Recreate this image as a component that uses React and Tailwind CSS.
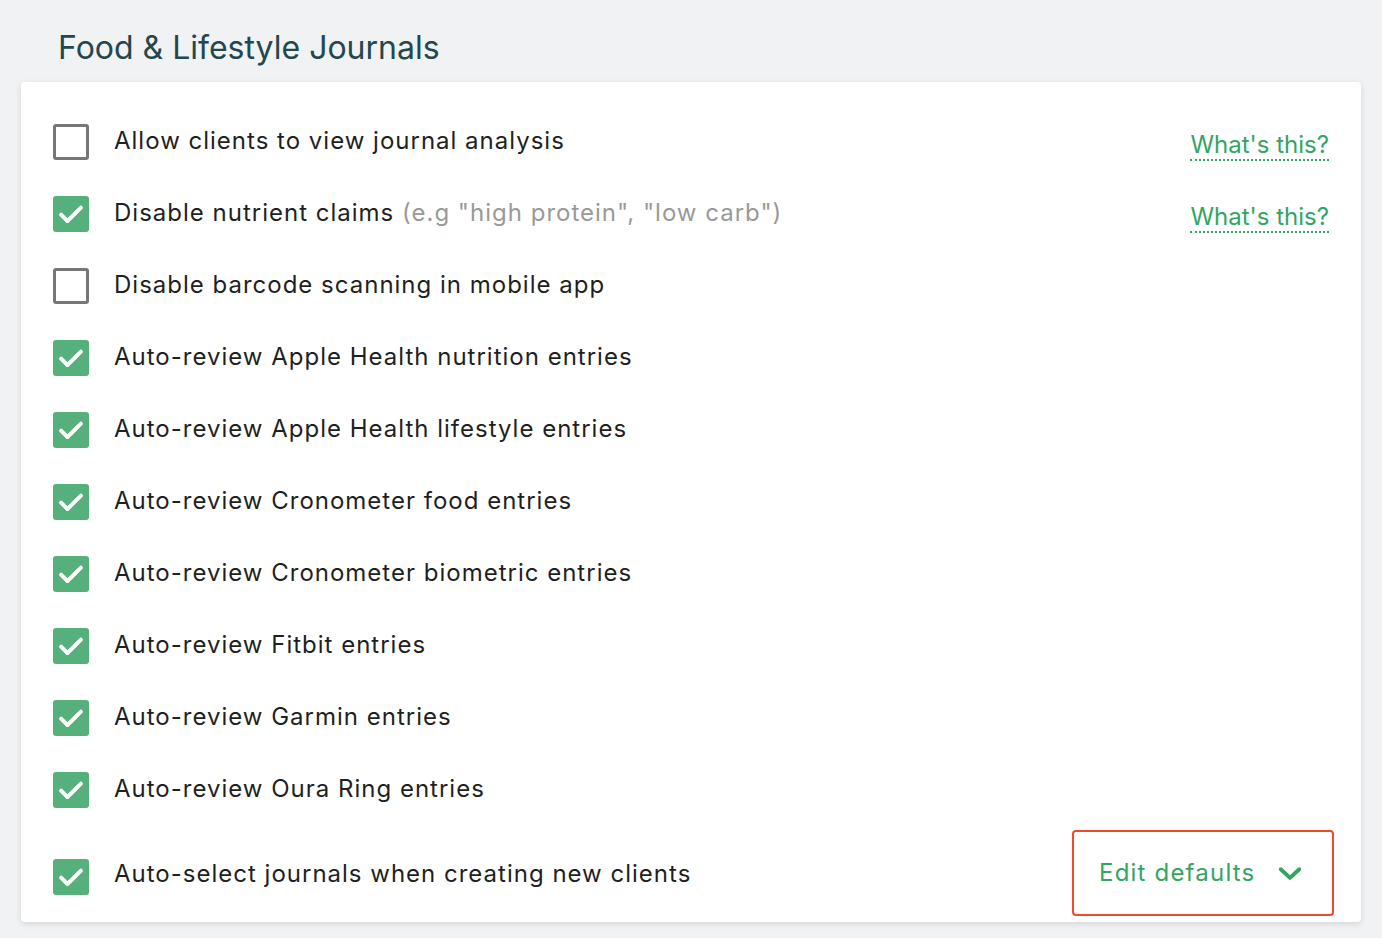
import React, { useState } from 'react';

const rows = [
  { label: 'Allow clients to view journal analysis', checked: false, help: true },
  { label: 'Disable nutrient claims', hint: '(e.g "high protein", "low carb")', checked: true, help: true },
  { label: 'Disable barcode scanning in mobile app', checked: false },
  { label: 'Auto-review Apple Health nutrition entries', checked: true },
  { label: 'Auto-review Apple Health lifestyle entries', checked: true },
  { label: 'Auto-review Cronometer food entries', checked: true },
  { label: 'Auto-review Cronometer biometric entries', checked: true },
  { label: 'Auto-review Fitbit entries', checked: true },
  { label: 'Auto-review Garmin entries', checked: true },
  { label: 'Auto-review Oura Ring entries', checked: true },
];

const Checkbox = ({ checked, onClick, className = '' }) => (
  <button
    onClick={onClick}
    className={`w-9 h-9 shrink-0 rounded-[3px] flex items-center justify-center ${className} ${
      checked ? 'bg-[#55b07b]' : 'border-[3px] border-[#777777] bg-white'
    }`}
  >
    {checked && (
      <svg width="28" height="28" viewBox="0 0 24 24" fill="none" stroke="white" strokeWidth="3.4" strokeLinecap="round" strokeLinejoin="round">
        <path d="M3.5 12.5l5.5 5.5L20.5 6.5" />
      </svg>
    )}
  </button>
);

const App = () => {
  const [checks, setChecks] = useState(rows.map((r) => r.checked));
  const [autoSelect, setAutoSelect] = useState(true);

  const toggle = (i) => setChecks((c) => c.map((v, j) => (j === i ? !v : v)));

  return (
    <div className="min-h-screen bg-[#f0f2f4] font-['Inter',sans-serif] px-[21px] pt-[28px] pb-4">
      <h2 className="pl-[37px] text-[32px] leading-[40px] text-[#24474d] mb-[14px]">Food &amp; Lifestyle Journals</h2>

      <div className="bg-white rounded shadow-[0_2px_6px_rgba(0,0,0,0.12)] pl-8 pr-[27px] pt-6 pb-[6px]">
        {rows.map((row, i) => (
          <div key={row.label} className="h-[72px] flex items-center">
            <Checkbox checked={checks[i]} onClick={() => toggle(i)} />
            <div className="ml-[25px] flex-1 text-[24px] tracking-[1px] text-[#1f1f1f] -mt-[2px]">
              {row.label}
              {row.hint && <span className="text-[#999999]"> {row.hint}</span>}
            </div>
            {row.help && (
              <a href="#" className="mr-[5px] mt-2 text-[24px] text-[#35a462] border-b-2 border-dotted border-[#35a462] leading-[28px]">
                What's this?
              </a>
            )}
          </div>
        ))}

        <div className="mt-1 flex items-start">
          <Checkbox checked={autoSelect} onClick={() => setAutoSelect(!autoSelect)} className="mt-[29px]" />
          <div className="ml-[25px] flex-1 text-[24px] tracking-[1px] text-[#1f1f1f] leading-9 mt-[26px]">
            Auto-select journals when creating new clients
          </div>
          <button className="w-[262px] h-[86px] border-2 border-[#ef4a2a] rounded flex items-center pl-[25px] gap-[22px] text-[24px] tracking-[1.2px] text-[#35a462]">
            Edit defaults
            <svg width="26" height="26" viewBox="0 0 24 24" fill="none" stroke="#35a462" strokeWidth="3.6" strokeLinecap="round" strokeLinejoin="round">
              <path d="M3.5 8.5l8.5 8 8.5-8" />
            </svg>
          </button>
        </div>
      </div>
    </div>
  );
};

export default App;
